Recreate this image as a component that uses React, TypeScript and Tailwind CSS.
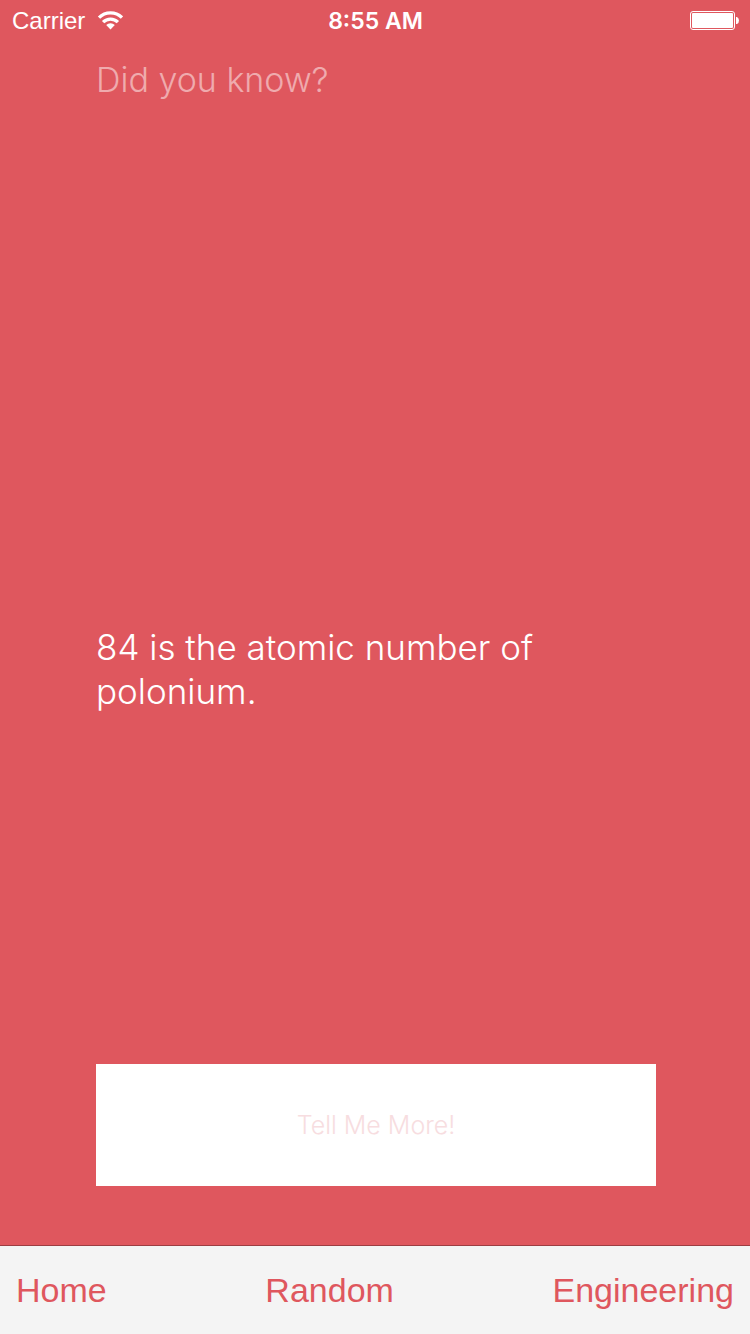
import React from "react";

function StatusBar() {
  return (
    <header className="grid h-[42px] shrink-0 grid-cols-3 items-center pr-[11px] pl-3 text-2xl leading-7 text-white">
      <div className="flex items-center gap-3">
        <span>Carrier</span>
        <svg viewBox="0 0 26 20" className="h-5 w-[26px]" role="img" aria-label="Wi-Fi">
          <g fill="none" stroke="currentColor" strokeWidth="3.3">
            <path d="M2 6.6A16.2 16.2 0 0 1 25 6.6" />
            <path d="M6.1 11.2A10.3 10.3 0 0 1 20.9 11.2" />
          </g>
          <path d="M13.5 18.4 L9.2 14.1 A6 6 0 0 1 17.8 14.1 Z" fill="currentColor" />
        </svg>
      </div>
      <time className="text-center font-['Inter','Liberation_Sans',sans-serif] text-[23px] font-semibold">
        8:55 AM
      </time>
      <svg viewBox="0 0 49 20" className="h-5 w-[49px] justify-self-end" role="img" aria-label="Battery full">
        <rect x="0.5" y="0.5" width="44" height="18" rx="2.5" fill="none" stroke="currentColor" />
        <rect x="2" y="2" width="41" height="15" rx="1" fill="currentColor" />
        <path d="M46 6H47Q49 7 49 9.5Q49 12 47 13H46Z" fill="currentColor" />
      </svg>
    </header>
  );
}

export default function App() {
  return (
    <div className="flex min-h-screen flex-col bg-[#df575e] font-['Liberation_Sans',Arial,sans-serif]">
      <StatusBar />
      <main className="flex grow flex-col pr-[94px] pb-[59px] pl-24 font-['Inter','Liberation_Sans',sans-serif] font-light text-white">
        <h1 className="pt-4 text-[34px] leading-[44px] text-white/50">Did you know?</h1>
        <p className="my-auto pt-[172px] text-[35px] leading-[44px]">84 is the atomic number of polonium.</p>
        <button type="button" className="h-[122px] w-full bg-white pt-0.5 text-[25px] text-[#f7dde0]">
          Tell Me More!
        </button>
      </main>
      <nav className="flex h-[89px] shrink-0 items-center justify-between border-t border-[#9c3d42] bg-[#f4f4f4] px-4 text-[34px] text-[#df575e]">
        <a href="#home">Home</a>
        <a href="#random">Random</a>
        <a href="#engineering">Engineering</a>
      </nav>
    </div>
  );
}
